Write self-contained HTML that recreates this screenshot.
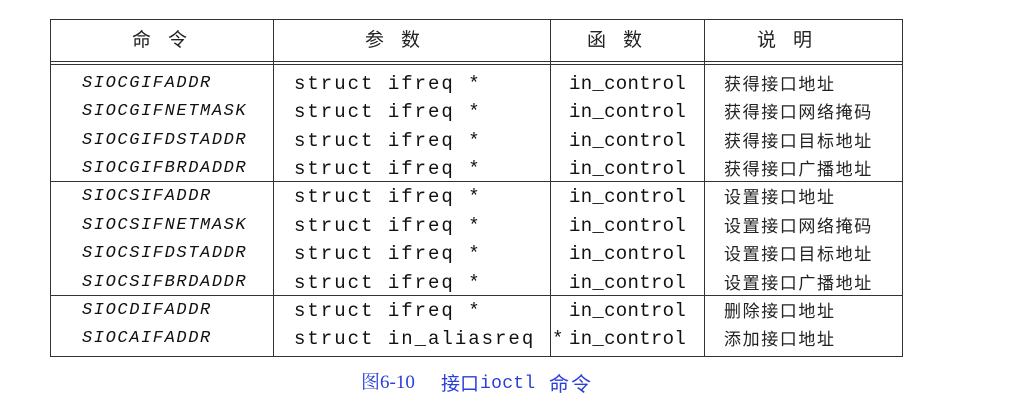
<!DOCTYPE html>
<html><head><meta charset="utf-8"><style>
body{margin:0;width:1022px;height:410px;background:#fff;position:relative;overflow:hidden;font-family:"Liberation Sans","Noto Sans CJK SC",sans-serif;color:#222}
.l{position:absolute;background:#333}
.t{position:absolute;white-space:pre;line-height:20px}
.c{font-family:"Liberation Mono",monospace;font-style:italic;font-size:17px;letter-spacing:1.6px;left:82px;color:#111}
.m{font-family:"Liberation Mono",monospace;font-size:19px;letter-spacing:2px;color:#111}
.n{font-family:"Liberation Mono",monospace;font-size:19px;letter-spacing:0.3px;left:569px;color:#111}
.z{font-family:"Noto Sans CJK SC",sans-serif;font-size:17px;letter-spacing:1.6px;left:724px}
.h{font-family:"Noto Sans CJK SC",sans-serif;font-size:19px;top:29px}
</style></head><body>
<div class="l" style="left:50px;top:19px;width:853px;height:1px"></div>
<div class="l" style="left:50px;top:61px;width:853px;height:1px"></div>
<div class="l" style="left:50px;top:64px;width:853px;height:1px"></div>
<div class="l" style="left:50px;top:181px;width:853px;height:1px"></div>
<div class="l" style="left:50px;top:295px;width:853px;height:1px"></div>
<div class="l" style="left:50px;top:356px;width:853px;height:1px"></div>
<div class="l" style="left:50px;top:19px;width:1px;height:338px"></div>
<div class="l" style="left:273px;top:19px;width:1px;height:338px"></div>
<div class="l" style="left:550px;top:19px;width:1px;height:338px"></div>
<div class="l" style="left:704px;top:19px;width:1px;height:338px"></div>
<div class="l" style="left:902px;top:19px;width:1px;height:338px"></div>
<div class="t h" style="left:132px">命&nbsp;&nbsp;&nbsp;&nbsp;令</div>
<div class="t h" style="left:365px">参&nbsp;&nbsp;&nbsp;&nbsp;数</div>
<div class="t h" style="left:587px">函&nbsp;&nbsp;&nbsp;&nbsp;数</div>
<div class="t h" style="left:757px">说&nbsp;&nbsp;&nbsp;&nbsp;明</div>

<div class="t c" style="top:74px">SIOCGIFADDR</div>
<div class="t c" style="top:102px">SIOCGIFNETMASK</div>
<div class="t c" style="top:131px">SIOCGIFDSTADDR</div>
<div class="t c" style="top:159px">SIOCGIFBRDADDR</div>
<div class="t c" style="top:187px">SIOCSIFADDR</div>
<div class="t c" style="top:216px">SIOCSIFNETMASK</div>
<div class="t c" style="top:244px">SIOCSIFDSTADDR</div>
<div class="t c" style="top:273px">SIOCSIFBRDADDR</div>
<div class="t c" style="top:301px">SIOCDIFADDR</div>
<div class="t c" style="top:329px">SIOCAIFADDR</div>

<div class="t m" style="left:294px;top:74px">struct ifreq *</div>
<div class="t m" style="left:294px;top:102px">struct ifreq *</div>
<div class="t m" style="left:294px;top:131px">struct ifreq *</div>
<div class="t m" style="left:294px;top:159px">struct ifreq *</div>
<div class="t m" style="left:294px;top:187px">struct ifreq *</div>
<div class="t m" style="left:294px;top:216px">struct ifreq *</div>
<div class="t m" style="left:294px;top:244px">struct ifreq *</div>
<div class="t m" style="left:294px;top:273px">struct ifreq *</div>
<div class="t m" style="left:294px;top:301px">struct ifreq *</div>
<div class="t m" style="left:294px;top:329px">struct in_aliasreq</div>
<div class="t m" style="left:552px;top:329px">*</div>

<div class="t n" style="top:74px">in_control</div>
<div class="t n" style="top:102px">in_control</div>
<div class="t n" style="top:131px">in_control</div>
<div class="t n" style="top:159px">in_control</div>
<div class="t n" style="top:187px">in_control</div>
<div class="t n" style="top:216px">in_control</div>
<div class="t n" style="top:244px">in_control</div>
<div class="t n" style="top:273px">in_control</div>
<div class="t n" style="top:301px">in_control</div>
<div class="t n" style="top:329px">in_control</div>

<div class="t z" style="top:73px">获得接口地址</div>
<div class="t z" style="top:101px">获得接口网络掩码</div>
<div class="t z" style="top:130px">获得接口目标地址</div>
<div class="t z" style="top:158px">获得接口广播地址</div>
<div class="t z" style="top:186px">设置接口地址</div>
<div class="t z" style="top:215px">设置接口网络掩码</div>
<div class="t z" style="top:243px">设置接口目标地址</div>
<div class="t z" style="top:272px">设置接口广播地址</div>
<div class="t z" style="top:300px">删除接口地址</div>
<div class="t z" style="top:328px">添加接口地址</div>

<div class="t" style="left:361px;top:373px;font-size:19px;color:#2a3fd8;font-family:'Liberation Serif','Noto Serif CJK SC',serif">图6-10</div>
<div class="t" style="left:441px;top:373px;font-size:19px;color:#2a3fd8;font-family:'Noto Sans CJK SC',sans-serif">接口</div>
<div class="t" style="left:480px;top:374px;font-size:18px;color:#2a3fd8;font-family:'Liberation Mono',monospace;letter-spacing:0.3px">ioctl</div>
<div class="t" style="left:549px;top:373px;font-size:20px;color:#2a3fd8;font-family:'Noto Sans CJK SC',sans-serif;letter-spacing:2px">命令</div>
</body></html>
